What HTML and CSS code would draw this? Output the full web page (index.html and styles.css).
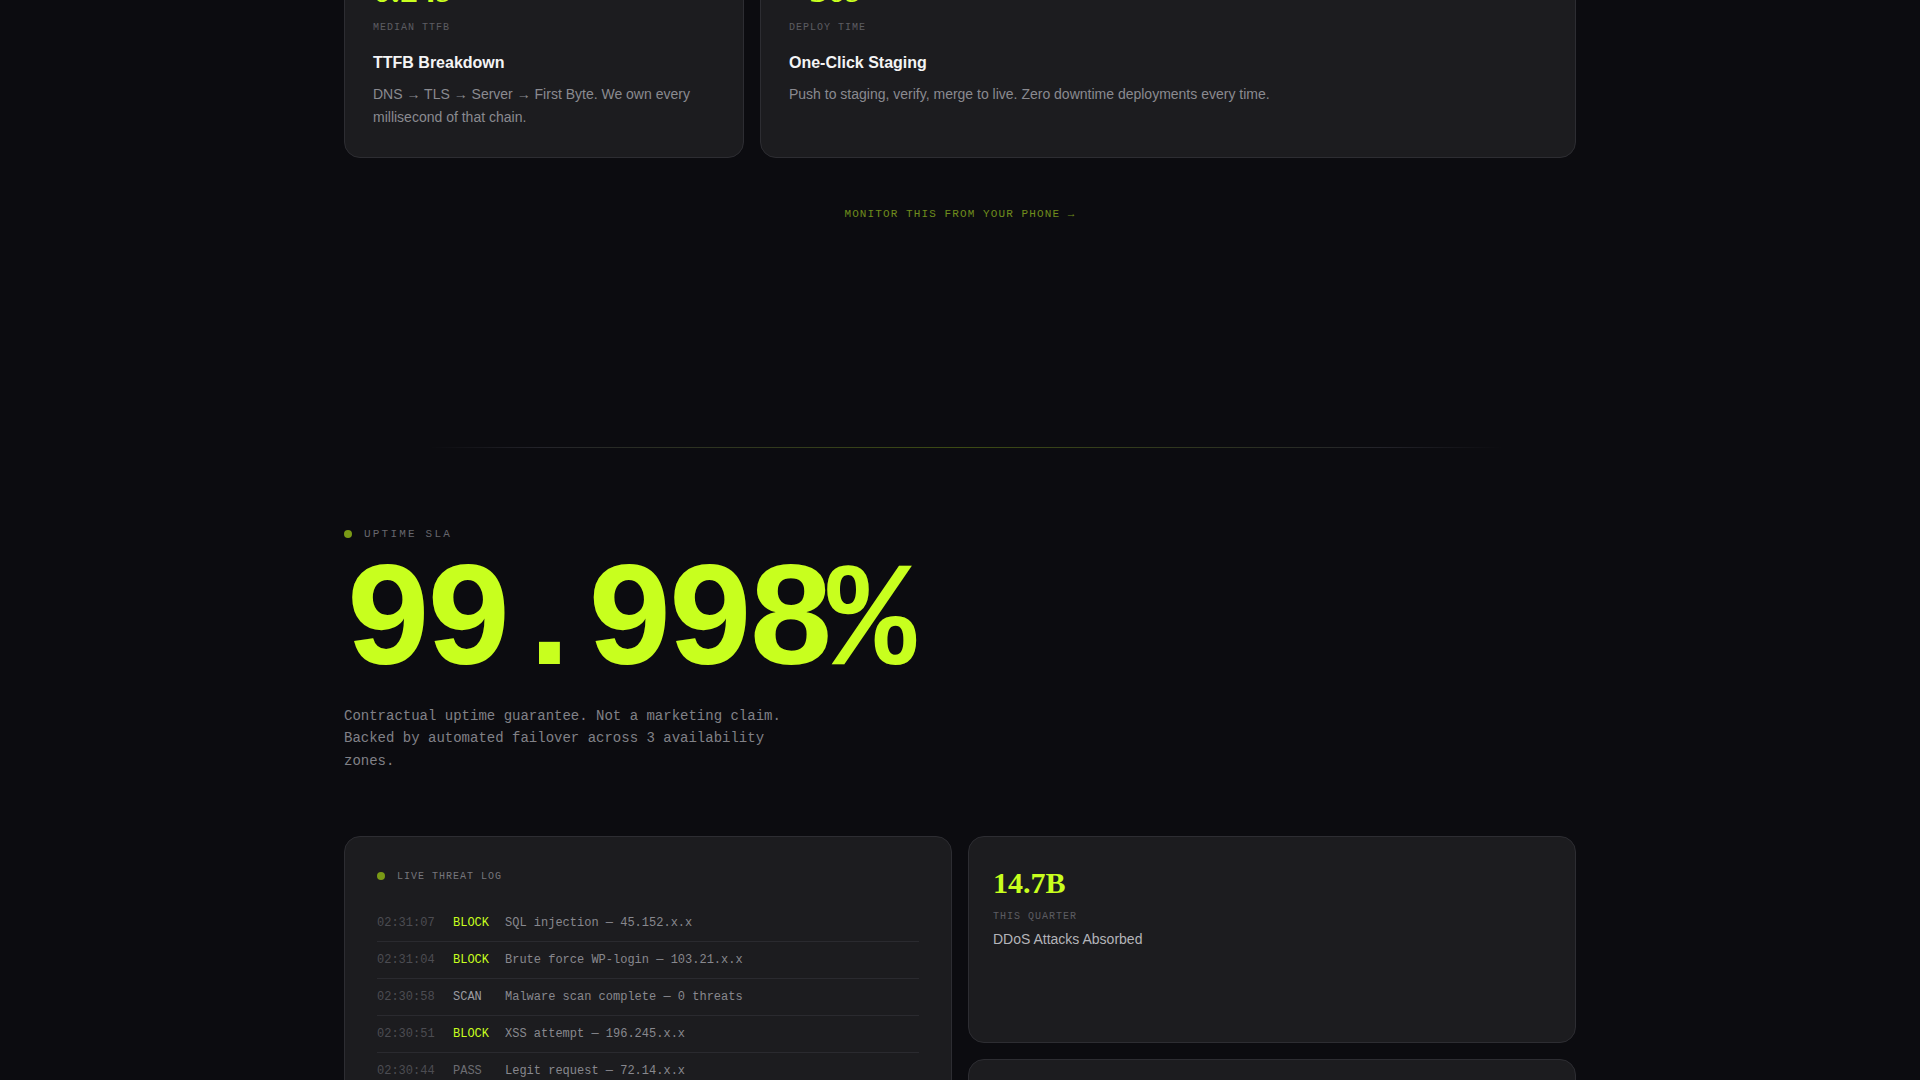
FILE: index.html
```html
<!DOCTYPE html>
<html lang="en">
<head>
<meta charset="UTF-8">
<meta name="viewport" content="width=device-width, initial-scale=1.0">
<title>Hosting - Performance &amp; Security</title>
<link rel="stylesheet" href="styles.css">
</head>
<body>
<main class="page">

    <section class="features">
        <article class="feature">
            <div class="feature-num">0.24s</div>
            <div class="feature-label">Median TTFB</div>
            <h3>TTFB Breakdown</h3>
            <p>DNS → TLS → Server → First Byte. We own every millisecond of that chain.</p>
        </article>
        <article class="feature feature-wide">
            <div class="feature-num">&lt;30s</div>
            <div class="feature-label">Deploy time</div>
            <h3>One-Click Staging</h3>
            <p>Push to staging, verify, merge to live. Zero downtime deployments every time.</p>
        </article>
    </section>

    <div class="phone-row">
        <a class="phone-link" href="#">Monitor this from your phone →</a>
    </div>

    <div class="divider"></div>

    <section class="uptime">
        <div class="eyebrow"><span class="dot"></span>Uptime SLA</div>
        <div class="uptime-value">99.998%</div>
        <p class="uptime-note">Contractual uptime guarantee. Not a marketing claim. Backed by automated failover across 3 availability zones.</p>
    </section>

    <section class="security">
        <div class="card log">
            <div class="eyebrow eyebrow-sm"><span class="dot"></span>Live threat log</div>
            <ul class="log-list">
                <li><span class="time">02:31:07</span><span class="status block">BLOCK</span><span class="msg">SQL injection — 45.152.x.x</span></li>
                <li><span class="time">02:31:04</span><span class="status block">BLOCK</span><span class="msg">Brute force WP-login — 103.21.x.x</span></li>
                <li><span class="time">02:30:58</span><span class="status scan">SCAN</span><span class="msg">Malware scan complete — 0 threats</span></li>
                <li><span class="time">02:30:51</span><span class="status block">BLOCK</span><span class="msg">XSS attempt — 196.245.x.x</span></li>
                <li><span class="time">02:30:44</span><span class="status pass">PASS</span><span class="msg">Legit request — 72.14.x.x</span></li>
                <li><span class="time">02:30:39</span><span class="status block">BLOCK</span><span class="msg">Path traversal — 91.108.x.x</span></li>
                <li><span class="time">02:30:31</span><span class="status pass">PASS</span><span class="msg">Legit request — 84.17.x.x</span></li>
                <li><span class="time">02:30:22</span><span class="status block">BLOCK</span><span class="msg">Bot signature — 185.220.x.x</span></li>
            </ul>
        </div>

        <div class="stack">
            <div class="card stat">
                <div class="stat-num">14.7B</div>
                <div class="feature-label">This quarter</div>
                <div class="stat-title">DDoS Attacks Absorbed</div>
            </div>
            <div class="card stat">
                <div class="stat-num">0</div>
                <div class="feature-label">Since launch</div>
                <div class="stat-title">Data Breaches</div>
            </div>
        </div>
    </section>

</main>
</body>
</html>
```

FILE: styles.css
```css
body {
    margin: 0;
    background-color: #0c0c10;
    color: #e8e8ea;
    font-family: "Liberation Sans", Arial, sans-serif;
}

.page {
    max-width: 1232px;
    margin: 0 auto;
}

.features {
    display: grid;
    grid-template-columns: repeat(3, 1fr);
    gap: 16px;
    margin-top: -58px;
}
.feature {
    background-color: #1c1c1f;
    border: 1px solid #2d2d32;
    border-radius: 16px;
    padding: 28px 28px 27px;
}
.feature-wide {
    grid-column: span 2;
}
.feature-num {
    font-family: "Liberation Serif", serif;
    font-weight: bold;
    font-size: 36px;
    line-height: 1.1;
    color: #c8ff1e;
}
.feature-label {
    margin-top: 9px;
    font-family: "Liberation Mono", monospace;
    font-size: 10px;
    line-height: 15px;
    letter-spacing: 0.1em;
    text-transform: uppercase;
    color: #5c5c62;
}
.feature h3 {
    margin: 18px 0 10px;
    font-size: 16px;
    line-height: 1.3;
    color: #f4f4f5;
}
.feature p {
    margin: 0;
    font-size: 14px;
    line-height: 1.65;
    color: #8a8a90;
}

.phone-row {
    margin-top: 45px;
    text-align: center;
}
.phone-link {
    font-family: "Liberation Mono", monospace;
    font-size: 11px;
    line-height: 16px;
    letter-spacing: 0.1em;
    text-transform: uppercase;
    text-decoration: none;
    color: #6f8c1c;
}

.divider {
    height: 1px;
    margin-top: 225px;
    background: linear-gradient(90deg, transparent 7%, #24242a 16%, rgba(200, 255, 30, 0.26) 50%, #24242a 84%, transparent 94%);
}

/* uptime block */
.uptime {
    padding-top: 78px;
}
.eyebrow {
    display: flex;
    align-items: center;
    gap: 12px;
    font-family: "Liberation Mono", monospace;
    font-size: 11px;
    line-height: 16px;
    letter-spacing: 0.2em;
    text-transform: uppercase;
    color: #66666c;
}
.dot {
    width: 8px;
    height: 8px;
    border-radius: 50%;
    background-color: #7a9a16;
}
.uptime-value {
    margin-top: 9px;
    font-family: "Liberation Mono", monospace;
    font-weight: bold;
    font-size: 148px;
    line-height: 1;
    letter-spacing: -0.056em;
    color: #c8ff1e;
}
.uptime-note {
    max-width: 460px;
    margin: 6px 0 0;
    font-family: "Liberation Mono", monospace;
    font-size: 14px;
    line-height: 1.62;
    color: #818187;
}

/* threat log + stats */
.security {
    display: grid;
    grid-template-columns: 1fr 1fr;
    gap: 16px;
    margin-top: 63px;
    padding-bottom: 80px;
}
.card {
    background-color: #1c1c1f;
    border: 1px solid #2d2d32;
    border-radius: 16px;
}
.log {
    padding: 32px;
}
.eyebrow-sm {
    gap: 12px;
    font-size: 10px;
    line-height: 15px;
    letter-spacing: 0.1em;
    color: #76767c;
}
.log-list {
    list-style: none;
    margin: 21px 0 0;
    padding: 0;
}
.log-list li {
    display: grid;
    grid-template-columns: 60px 36px 1fr;
    gap: 16px;
    padding: 9px 0;
    border-bottom: 1px solid #2a2a2f;
    font-family: "Liberation Mono", monospace;
    font-size: 12px;
    line-height: 18px;
    color: #88888e;
}
.log-list li:last-child {
    border-bottom: none;
}
.time {
    color: #4c4c52;
}
.block {
    color: #c8ff1e;
}
.scan {
    color: #9a9aa0;
}
.pass {
    color: #6c6c72;
}

.stack {
    display: flex;
    flex-direction: column;
    gap: 16px;
}
.stat {
    min-height: 207px;
    box-sizing: border-box;
    padding: 28px 24px;
}
.stat-num {
    font-family: "Liberation Serif", serif;
    font-weight: bold;
    font-size: 30px;
    line-height: 1.2;
    color: #c8ff1e;
}
.stat .feature-label {
    margin-top: 8px;
}
.stat-title {
    margin-top: 5px;
    font-size: 14px;
    line-height: 1.5;
    color: #b4b4b9;
}
```
